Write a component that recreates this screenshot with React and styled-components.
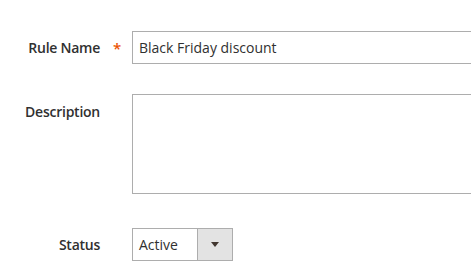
import React from "react";
import styled, { createGlobalStyle } from "styled-components";

const GlobalStyle = createGlobalStyle`
  html, body {
    margin: 0;
    background: #ffffff;
  }
  body {
    font-family: "Open Sans", "Liberation Sans", sans-serif;
    color: #303030;
  }
`;

const Form = styled.div`
  display: flex;
  flex-direction: column;
  gap: 30px;
  padding-top: 31px;
  width: 471px;
  overflow: hidden;
`;

const Row = styled.div`
  display: flex;
  align-items: flex-start;
  margin-top: ${({ $offset }) => $offset || 0}px;
`;

const Label = styled.label`
  width: 132px;
  flex-shrink: 0;
  display: flex;
  justify-content: flex-end;
  align-items: center;
  height: ${({ $tall }) => ($tall ? 35 : 33)}px;
  font-size: 14px;
  font-weight: 600;
  letter-spacing: -0.25px;
  color: #303030;
`;

const Mark = styled.span`
  width: 30px;
  text-align: center;
  color: #eb5202;
  font-size: 15px;
  font-weight: 600;
  padding-left: 2px;
`;

const TextInput = styled.input`
  box-sizing: border-box;
  width: 360px;
  height: 33px;
  border: 1px solid #adadad;
  border-right: none;
  padding: 0 6px;
  font-family: "Open Sans", "Liberation Sans", sans-serif;
  font-size: 14px;
  color: #303030;
  outline: none;
`;

const TextArea = styled.textarea`
  box-sizing: border-box;
  width: 360px;
  height: 100px;
  border: 1px solid #adadad;
  border-right: none;
  resize: none;
  outline: none;
  display: block;
`;

const Select = styled.div`
  box-sizing: border-box;
  width: 101px;
  height: 33px;
  border: 1px solid #adadad;
  display: flex;
  align-items: stretch;
  background: #fff;
`;

const SelectValue = styled.span`
  flex: 1;
  display: flex;
  align-items: center;
  padding-left: 6px;
  font-size: 14px;
  color: #303030;
`;

const SelectButton = styled.span`
  width: 33px;
  border-left: 1px solid #adadad;
  background: #e3e3e3;
  display: flex;
  align-items: center;
  justify-content: center;
  padding-right: 1px;
`;

const Arrow = styled.span`
  width: 0;
  height: 0;
  border-left: 4px solid transparent;
  border-right: 4px solid transparent;
  border-top: 5px solid #41362f;
`;

export default function App() {
  return (
    <>
      <GlobalStyle />
      <Form>
        <Row>
          <Label>
            Rule Name<Mark>*</Mark>
          </Label>
          <TextInput defaultValue="Black Friday discount" />
        </Row>
        <Row>
          <Label $tall>
            Description<Mark />
          </Label>
          <TextArea />
        </Row>
        <Row $offset={4}>
          <Label>
            Status<Mark />
          </Label>
          <Select>
            <SelectValue>Active</SelectValue>
            <SelectButton>
              <Arrow />
            </SelectButton>
          </Select>
        </Row>
      </Form>
    </>
  );
}
